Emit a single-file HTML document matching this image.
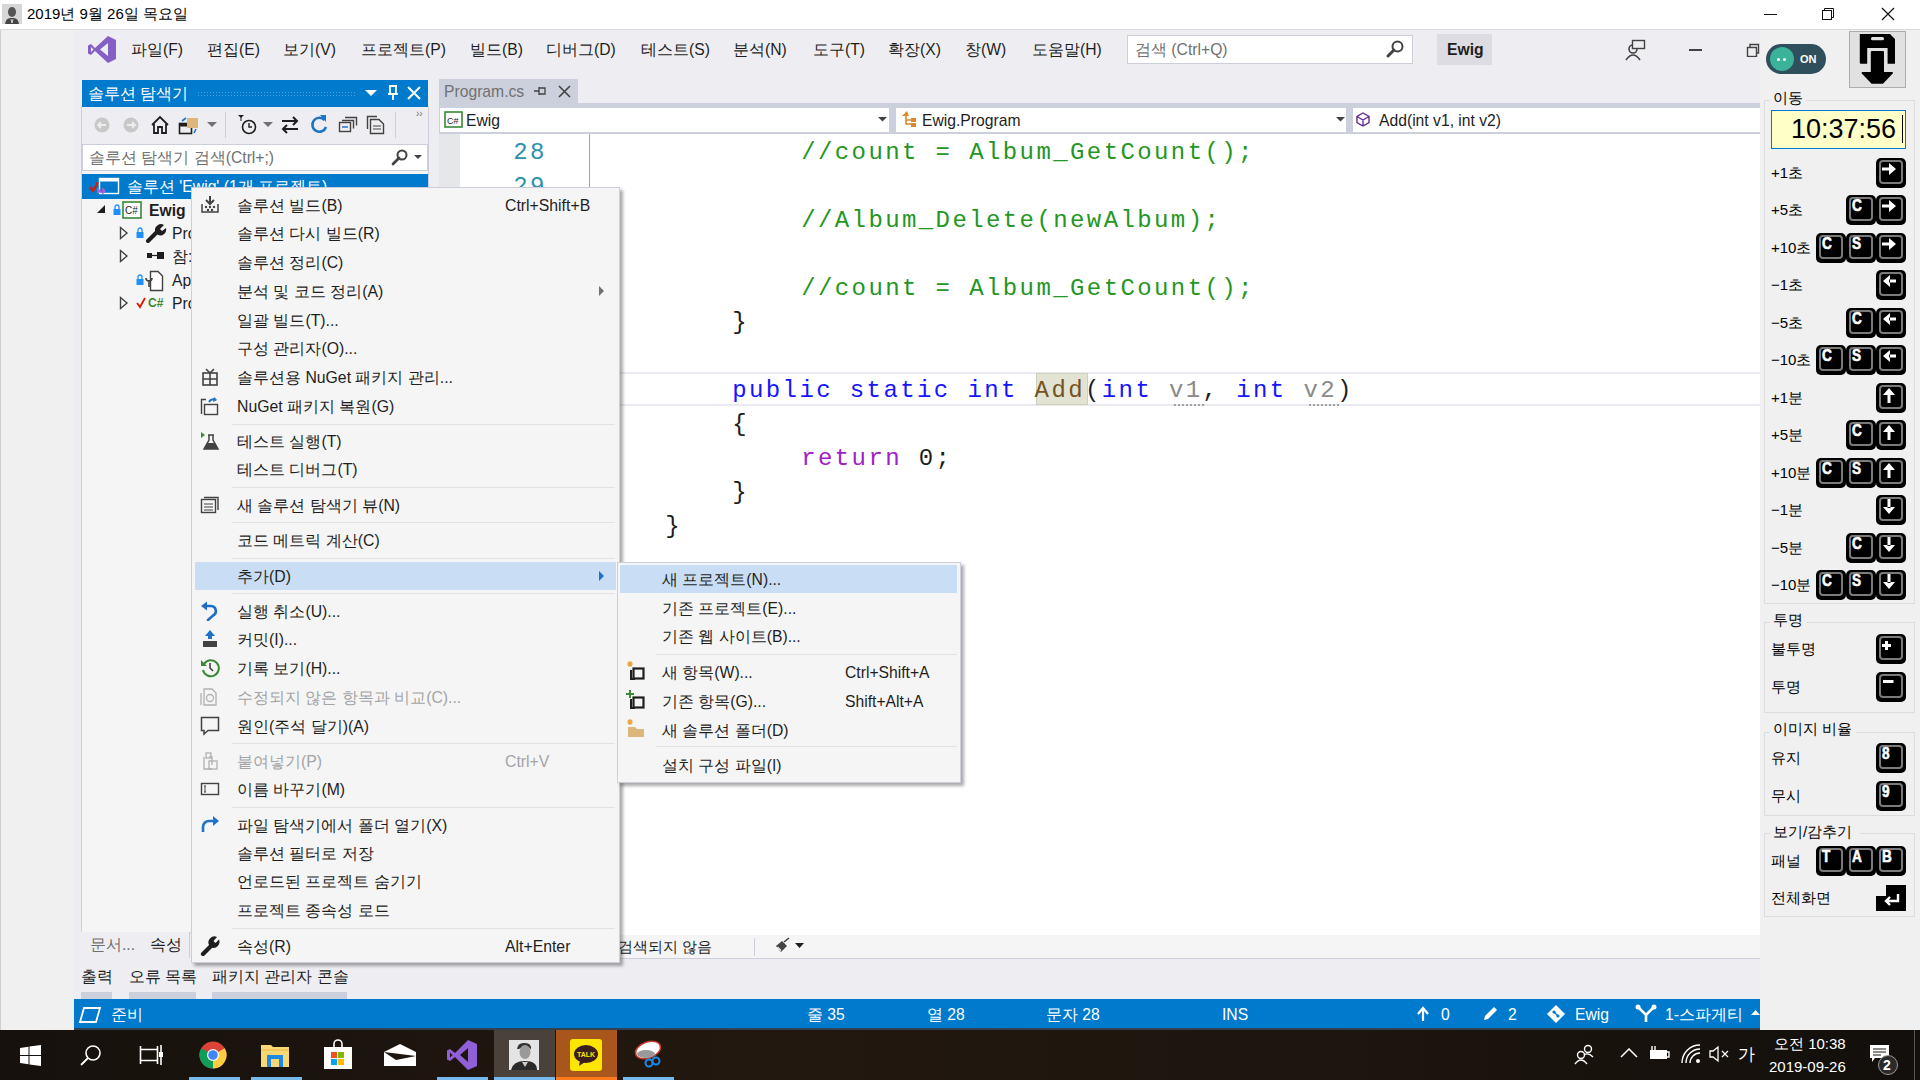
<!DOCTYPE html>
<html><head><meta charset="utf-8"><style>
*{margin:0;padding:0;box-sizing:border-box}
html,body{width:1920px;height:1080px;overflow:hidden;background:#f0f0f0;font-family:"Liberation Sans",sans-serif;color:#1e1e1e;position:relative}
.a{position:absolute}
.t{position:absolute;white-space:nowrap}
.m{font-family:"Liberation Mono",monospace;position:absolute;white-space:pre;font-size:24px;letter-spacing:2.4px;line-height:34px}
</style></head><body>
<div class="a" style="left:0px;top:0px;width:1920px;height:29px;background:#fff"></div>
<div class="a" style="left:0px;top:29px;width:1920px;height:1px;background:#d9d9d9"></div>
<div class="a" style="left:0px;top:30px;width:1px;height:1000px;background:#cfcfcf"></div>
<div class="a" style="left:73px;top:30px;width:1687px;height:1000px;background:#eeeef2"></div>
<div class="a" style="left:2px;top:4px;width:20px;height:20px;background:#d6d6d6"></div>
<svg class="a" style="left:2px;top:4px;" width="20" height="20" viewBox="0 0 20 20"><ellipse cx="10" cy="8" rx="4" ry="5" fill="#555"/><path d="M3 20 Q4 13 10 14 Q16 13 17 20Z" fill="#444"/><path d="M9 15L10 19L11 15" stroke="#ddd" stroke-width="1"/></svg>
<div class="t" style="left:27px;top:2.5px;font-size:15.01px;line-height:21px;color:#000;">2019년 9월 26일 목요일</div>
<div class="a" style="left:1764px;top:14px;width:13px;height:1px;background:#111"></div>
<svg class="a" style="left:1821px;top:7px;" width="14" height="14" viewBox="0 0 14 14"><rect x="1.5" y="3.5" width="9" height="9" fill="none" stroke="#111"/><path d="M3.5 3.5V1.5H12.5V10.5H10.5" fill="none" stroke="#111"/></svg>
<svg class="a" style="left:1881px;top:7px;" width="14" height="14" viewBox="0 0 14 14"><path d="M1 1L13 13M13 1L1 13" stroke="#111" stroke-width="1.2"/></svg>
<svg class="a" style="left:88px;top:36px;" width="28" height="27" viewBox="0 0 28 27"><path d="M20 0 L28 4 V23 L20 27 L7 15 L3 19 L0 17.5 V9.5 L3 8 L7 12 Z M20 7 L12 13.5 L20 20 Z M3 11 V16 L5.5 13.5 Z" fill="#865fc5" fill-rule="evenodd"/></svg>
<div class="t" style="left:131px;top:38.5px;font-size:15.7px;line-height:21px;color:#1e1e1e;">파일(F)</div>
<div class="t" style="left:207px;top:38.5px;font-size:15.7px;line-height:21px;color:#1e1e1e;">편집(E)</div>
<div class="t" style="left:283px;top:38.5px;font-size:15.7px;line-height:21px;color:#1e1e1e;">보기(V)</div>
<div class="t" style="left:361px;top:38.5px;font-size:15.7px;line-height:21px;color:#1e1e1e;">프로젝트(P)</div>
<div class="t" style="left:470px;top:38.5px;font-size:15.7px;line-height:21px;color:#1e1e1e;">빌드(B)</div>
<div class="t" style="left:546px;top:38.5px;font-size:15.7px;line-height:21px;color:#1e1e1e;">디버그(D)</div>
<div class="t" style="left:641px;top:38.5px;font-size:15.7px;line-height:21px;color:#1e1e1e;">테스트(S)</div>
<div class="t" style="left:733px;top:38.5px;font-size:15.7px;line-height:21px;color:#1e1e1e;">분석(N)</div>
<div class="t" style="left:813px;top:38.5px;font-size:15.7px;line-height:21px;color:#1e1e1e;">도구(T)</div>
<div class="t" style="left:888px;top:38.5px;font-size:15.7px;line-height:21px;color:#1e1e1e;">확장(X)</div>
<div class="t" style="left:965px;top:38.5px;font-size:15.7px;line-height:21px;color:#1e1e1e;">창(W)</div>
<div class="t" style="left:1032px;top:38.5px;font-size:15.7px;line-height:21px;color:#1e1e1e;">도움말(H)</div>
<div class="a" style="left:1127px;top:35px;width:286px;height:29px;background:#fff;border:1px solid #cccedb"></div>
<div class="t" style="left:1135px;top:38.5px;font-size:15.7px;line-height:21px;color:#717171;">검색 (Ctrl+Q)</div>
<svg class="a" style="left:1385px;top:39px;" width="20" height="20" viewBox="0 0 20 20"><circle cx="12.5" cy="7.5" r="5" fill="none" stroke="#424242" stroke-width="2"/><path d="M9 11 L3 17" stroke="#424242" stroke-width="3" stroke-linecap="round"/></svg>
<div class="a" style="left:1437px;top:34px;width:55px;height:31px;background:#dcdce2"></div>
<div class="t" style="left:1447px;top:38.5px;font-size:15.7px;line-height:21px;color:#1e1e1e;font-weight:bold">Ewig</div>
<svg class="a" style="left:1624px;top:38px;" width="24" height="24" viewBox="0 0 24 24"><circle cx="9" cy="11" r="4" fill="none" stroke="#424242" stroke-width="1.6"/><path d="M2 22 Q9 12 16 22" fill="none" stroke="#424242" stroke-width="1.6"/><rect x="8.5" y="2.5" width="12" height="8" fill="#eeeef2" stroke="#424242" stroke-width="1.4"/></svg>
<div class="a" style="left:1689px;top:49px;width:13px;height:2px;background:#424242"></div>
<svg class="a" style="left:1746px;top:43px;" width="14" height="14" viewBox="0 0 14 14"><rect x="1.5" y="4.5" width="9" height="9" fill="none" stroke="#424242" stroke-width="1.4"/><path d="M4 4V1.5H12.5V10H11" fill="none" stroke="#424242" stroke-width="1.4"/></svg>
<div class="a" style="left:82px;top:80px;width:346px;height:27px;background:#007acc"></div>
<div class="t" style="left:88px;top:82.5px;font-size:15.7px;line-height:21px;color:#fff;">솔루션 탐색기</div>
<div class="a" style="left:197px;top:91px;width:158px;height:6px;background-image:radial-gradient(#5aa5dc 0.8px,transparent 0.9px);background-size:3px 3px;opacity:.9"></div>
<svg class="a" style="left:364px;top:86px;" width="14" height="14" viewBox="0 0 14 14"><path d="M1 4H13L7 10Z" fill="#fff"/></svg>
<svg class="a" style="left:386px;top:85px;" width="14" height="16" viewBox="0 0 14 16"><path d="M3 1H11M4 1V9H10V1M2 9H12M7 9V15" fill="none" stroke="#fff" stroke-width="1.8"/></svg>
<svg class="a" style="left:407px;top:86px;" width="14" height="14" viewBox="0 0 14 14"><path d="M1 1L13 13M13 1L1 13" stroke="#fff" stroke-width="2"/></svg>
<div class="a" style="left:81px;top:107px;width:348px;height:826px;background:#f5f5f5;border:1px solid #cccedb;border-top:none"></div>
<div class="a" style="left:82px;top:107px;width:346px;height:37px;background:#eeeef2"></div>
<svg class="a" style="left:93px;top:116px;" width="18" height="18" viewBox="0 0 18 18"><circle cx="9" cy="9" r="7.5" fill="#c8c8c8"/><path d="M13 9H5M8 6L5 9L8 12" stroke="#eee" stroke-width="1.8" fill="none"/></svg>
<svg class="a" style="left:122px;top:116px;" width="18" height="18" viewBox="0 0 18 18"><circle cx="9" cy="9" r="7.5" fill="#c8c8c8"/><path d="M5 9H13M10 6L13 9L10 12" stroke="#eee" stroke-width="1.8" fill="none"/></svg>
<svg class="a" style="left:150px;top:115px;" width="20" height="20" viewBox="0 0 20 20"><path d="M2 10L10 2L18 10M4 9V18H8V12H12V18H16V9" fill="none" stroke="#1e1e1e" stroke-width="1.8"/></svg>
<svg class="a" style="left:178px;top:115px;" width="22" height="20" viewBox="0 0 22 20"><rect x="1.5" y="8.5" width="12" height="10" fill="none" stroke="#1e1e1e" stroke-width="1.6"/><rect x="1.5" y="8.5" width="12" height="3" fill="#1e1e1e"/><rect x="9" y="3" width="11" height="10" fill="#dcb67a"/><path d="M4 6 L8 3 M18 14 L16 18" stroke="#1e73c8" stroke-width="1.6"/></svg>
<svg class="a" style="left:207px;top:122px;" width="10" height="6" viewBox="0 0 10 6"><path d="M0 0H10L5 5Z" fill="#717171"/></svg>
<div class="a" style="left:225px;top:112px;width:1px;height:26px;background:#cccedb"></div>
<svg class="a" style="left:236px;top:114px;" width="22" height="22" viewBox="0 0 22 22"><path d="M2 1H8L5 4Z" fill="#1e1e1e"/><path d="M5 3V7" stroke="#1e1e1e"/><circle cx="13" cy="13" r="6.5" fill="none" stroke="#1e1e1e" stroke-width="1.6"/><path d="M13 9V13H16" stroke="#1e1e1e" stroke-width="1.4" fill="none"/></svg>
<svg class="a" style="left:263px;top:122px;" width="10" height="6" viewBox="0 0 10 6"><path d="M0 0H10L5 5Z" fill="#717171"/></svg>
<svg class="a" style="left:280px;top:116px;" width="20" height="18" viewBox="0 0 20 18"><path d="M2 5H17M13 1L17 5L13 9M18 13H3M7 9L3 13L7 17" fill="none" stroke="#1e1e1e" stroke-width="2"/></svg>
<svg class="a" style="left:309px;top:114px;" width="20" height="22" viewBox="0 0 20 22"><path d="M15.5 6A7 7 0 1 0 17 13" fill="none" stroke="#1e73c8" stroke-width="2.6"/><path d="M11 1L17 1L17 8Z" fill="#1e73c8"/></svg>
<svg class="a" style="left:338px;top:116px;" width="20" height="18" viewBox="0 0 20 18"><rect x="1.5" y="6.5" width="11" height="9" fill="#eeeef2" stroke="#424242" stroke-width="1.4"/><path d="M4 4.5H15.5V12.5M7 1.5H18.5V9.5" fill="none" stroke="#424242" stroke-width="1.4"/><path d="M4 11H10" stroke="#1e73c8" stroke-width="1.5"/></svg>
<svg class="a" style="left:366px;top:115px;" width="20" height="20" viewBox="0 0 20 20"><path d="M1.5 14V1.5H11" fill="none" stroke="#424242" stroke-width="1.4"/><path d="M4.5 4.5H13L17.5 9V18.5H4.5Z" fill="#eeeef2" stroke="#424242" stroke-width="1.4"/><path d="M7 11H15M7 14H15" stroke="#424242" stroke-width="1.2"/></svg>
<div class="a" style="left:395px;top:112px;width:1px;height:26px;background:#cccedb"></div>
<div class="t" style="left:416px;top:107.0px;font-size:10px;line-height:14px;color:#717171;">&#8250;&#8250;</div>
<div class="a" style="left:82px;top:144px;width:346px;height:27px;background:#fff;border:1px solid #cccedb"></div>
<div class="t" style="left:89px;top:146.5px;font-size:15.7px;line-height:21px;color:#717171;">솔루션 탐색기 검색(Ctrl+;)</div>
<svg class="a" style="left:391px;top:148px;" width="18" height="18" viewBox="0 0 18 18"><circle cx="11" cy="7" r="4.5" fill="none" stroke="#424242" stroke-width="2"/><path d="M8 10L2 16" stroke="#424242" stroke-width="2.8" stroke-linecap="round"/></svg>
<svg class="a" style="left:414px;top:155px;" width="8" height="5" viewBox="0 0 8 5"><path d="M0 0H8L4 4Z" fill="#424242"/></svg>
<div class="a" style="left:82px;top:174px;width:346px;height:25px;background:#007acc"></div>
<svg class="a" style="left:88px;top:176px;" width="34" height="22" viewBox="0 0 34 22"><path d="M2 11L5 15L10 6" stroke="#e51400" stroke-width="2.2" fill="none"/><rect x="11.5" y="2.5" width="19" height="15" fill="#007acc" stroke="#fff" stroke-width="1.4"/><rect x="11.5" y="2.5" width="19" height="3" fill="#fff"/><path d="M9 12L14 15L9 18Z M14 11V19L18 15Z" fill="#a55fd8"/></svg>
<div class="t" style="left:127px;top:175.5px;font-size:15.7px;line-height:21px;color:#fff;">솔루션 'Ewig' (1개 프로젝트)</div>
<svg class="a" style="left:96px;top:204px;" width="10" height="10" viewBox="0 0 10 10"><path d="M9 1V9H1Z" fill="#1e1e1e"/></svg>
<svg class="a" style="left:112px;top:203px;" width="10" height="13" viewBox="0 0 10 13"><path d="M3 6V4A2 2 0 0 1 7 4V6" fill="none" stroke="#1e90ff" stroke-width="1.3"/><rect x="1.5" y="6" width="7" height="6" fill="#1e90ff"/></svg>
<svg class="a" style="left:122px;top:201px;" width="20" height="18" viewBox="0 0 20 18"><rect x="1" y="1" width="18" height="16" fill="#fff" stroke="#388a34" stroke-width="1.6"/><text x="3" y="13" font-size="10" font-family="Liberation Sans" fill="#1e1e1e">C#</text></svg>
<div class="t" style="left:149px;top:199.5px;font-size:15.7px;line-height:21px;color:#1e1e1e;font-weight:bold">Ewig</div>
<svg class="a" style="left:119px;top:226px;" width="10" height="14" viewBox="0 0 10 14"><path d="M1.5 1.5L8 7L1.5 12.5Z" fill="none" stroke="#424242" stroke-width="1.4"/></svg>
<svg class="a" style="left:119px;top:249px;" width="10" height="14" viewBox="0 0 10 14"><path d="M1.5 1.5L8 7L1.5 12.5Z" fill="none" stroke="#424242" stroke-width="1.4"/></svg>
<svg class="a" style="left:119px;top:296px;" width="10" height="14" viewBox="0 0 10 14"><path d="M1.5 1.5L8 7L1.5 12.5Z" fill="none" stroke="#424242" stroke-width="1.4"/></svg>
<svg class="a" style="left:135px;top:226px;" width="10" height="13" viewBox="0 0 10 13"><path d="M3 6V4A2 2 0 0 1 7 4V6" fill="none" stroke="#1e90ff" stroke-width="1.3"/><rect x="1.5" y="6" width="7" height="6" fill="#1e90ff"/></svg>
<svg class="a" style="left:145px;top:223px;" width="22" height="20" viewBox="0 0 22 20"><path d="M3 18L12 9" stroke="#1e1e1e" stroke-width="4" stroke-linecap="round"/><path d="M10 8A6 6 0 0 1 19 2L15 6L17 8L21 5A6 6 0 0 1 13 12Z" fill="#1e1e1e"/></svg>
<div class="t" style="left:172px;top:222.5px;font-size:15.7px;line-height:21px;color:#1e1e1e;">Pro</div>
<svg class="a" style="left:145px;top:250px;" width="22" height="12" viewBox="0 0 22 12"><rect x="2" y="3" width="5" height="5" fill="#1e1e1e"/><path d="M7 5.5H12" stroke="#1e1e1e" stroke-width="1.2"/><rect x="12" y="2" width="7" height="7" fill="#1e1e1e"/></svg>
<div class="t" style="left:172px;top:245.5px;font-size:15.7px;line-height:21px;color:#1e1e1e;">참:</div>
<svg class="a" style="left:135px;top:273px;" width="10" height="13" viewBox="0 0 10 13"><path d="M3 6V4A2 2 0 0 1 7 4V6" fill="none" stroke="#1e90ff" stroke-width="1.3"/><rect x="1.5" y="6" width="7" height="6" fill="#1e90ff"/></svg>
<svg class="a" style="left:145px;top:270px;" width="20" height="22" viewBox="0 0 20 22"><path d="M5.5 1.5H13L17.5 6V20.5H5.5Z" fill="#fff" stroke="#424242" stroke-width="1.4"/><path d="M1 8A3 3 0 0 0 7 8M4 10V17" stroke="#424242" stroke-width="1.6" fill="none"/></svg>
<div class="t" style="left:172px;top:269.5px;font-size:15.7px;line-height:21px;color:#1e1e1e;">Ap</div>
<svg class="a" style="left:136px;top:297px;" width="10" height="12" viewBox="0 0 10 12"><path d="M1 6L4 10L9 1" stroke="#e51400" stroke-width="1.8" fill="none"/></svg>
<div class="t" style="left:148px;top:295.0px;font-size:12px;line-height:16px;color:#388a34;font-weight:bold">C#</div>
<div class="t" style="left:172px;top:292.5px;font-size:15.7px;line-height:21px;color:#1e1e1e;">Pro</div>
<div class="a" style="left:439px;top:79px;width:139px;height:24px;background:#ccd0dc"></div>
<div class="t" style="left:444px;top:80.5px;font-size:15.7px;line-height:21px;color:#717171;">Program.cs</div>
<svg class="a" style="left:533px;top:85px;" width="14" height="12" viewBox="0 0 14 12"><path d="M1 6H6M6 2V10M6 3H12V9H6" fill="none" stroke="#424242" stroke-width="1.3"/></svg>
<svg class="a" style="left:558px;top:85px;" width="13" height="13" viewBox="0 0 13 13"><path d="M1 1L12 12M12 1L1 12" stroke="#424242" stroke-width="1.6"/></svg>
<div class="a" style="left:439px;top:103px;width:1321px;height:4px;background:#ccd0dc"></div>
<div class="a" style="left:439px;top:107px;width:1321px;height:27px;background:#ccd0dc"></div>
<div class="a" style="left:440px;top:108px;width:449px;height:24px;background:#fff"></div>
<div class="a" style="left:896px;top:108px;width:450px;height:24px;background:#fff"></div>
<div class="a" style="left:1353px;top:108px;width:407px;height:24px;background:#fff"></div>
<svg class="a" style="left:444px;top:111px;" width="19" height="17" viewBox="0 0 19 17"><rect x="1" y="1" width="17" height="15" fill="#fff" stroke="#388a34" stroke-width="1.6"/><text x="3" y="12.5" font-size="9" font-family="Liberation Sans" fill="#1e1e1e">C#</text></svg>
<div class="t" style="left:466px;top:109.5px;font-size:15.7px;line-height:21px;color:#1e1e1e;">Ewig</div>
<svg class="a" style="left:878px;top:117px;" width="9" height="5" viewBox="0 0 9 5"><path d="M0 0H9L4.5 4.5Z" fill="#424242"/></svg>
<svg class="a" style="left:900px;top:110px;" width="20" height="20" viewBox="0 0 20 20"><path d="M2 6L7 1L9 6Z" fill="#d98b2b"/><path d="M6 6V14H13M6 10H13" stroke="#d98b2b" stroke-width="1.6" fill="none"/><rect x="11" y="8" width="5" height="4" fill="#d98b2b"/><rect x="11" y="13" width="5" height="4" fill="#d98b2b"/></svg>
<div class="t" style="left:922px;top:109.5px;font-size:15.7px;line-height:21px;color:#1e1e1e;">Ewig.Program</div>
<svg class="a" style="left:1336px;top:117px;" width="9" height="5" viewBox="0 0 9 5"><path d="M0 0H9L4.5 4.5Z" fill="#424242"/></svg>
<svg class="a" style="left:1356px;top:112px;" width="14" height="15" viewBox="0 0 14 15"><path d="M7 1L13 4.5V10.5L7 14L1 10.5V4.5Z M1 4.5L7 8L13 4.5M7 8V14" fill="none" stroke="#652d90" stroke-width="1.4"/></svg>
<div class="t" style="left:1379px;top:109.5px;font-size:15.7px;line-height:21px;color:#1e1e1e;">Add(int v1, int v2)</div>
<div class="a" style="left:439px;top:134px;width:1321px;height:801px;background:#fff"></div>
<div class="a" style="left:439px;top:134px;width:21px;height:801px;background:#e6e7e8"></div>
<div class="a" style="left:589px;top:134px;width:1px;height:801px;background:#a5a5a5"></div>
<div class="a" style="left:590px;top:372px;width:1170px;height:2px;background:#eaeaf2"></div>
<div class="a" style="left:590px;top:404px;width:1170px;height:2px;background:#eaeaf2"></div>
<div class="m" style="left:513.2px;top:136px;color:#2b91af">28</div>
<div class="m" style="left:513.2px;top:170px;color:#2b91af">29</div>
<div class="m" style="left:801.2px;top:136px;color:#239623">//count = Album_GetCount();</div>
<div class="m" style="left:801.2px;top:204px;color:#239623">//Album_Delete(newAlbum);</div>
<div class="m" style="left:801.2px;top:272px;color:#239623">//count = Album_GetCount();</div>
<div class="m" style="left:732.2px;top:306px;color:#1e1e1e">}</div>
<div class="a" style="left:1036px;top:373px;width:52px;height:32px;background:#e3e3d3;border:1px solid #cfcfbf"></div>
<div class="m" style="left:732.2px;top:374px;color:#1515ff">public static int </div>
<div class="m" style="left:1034.6px;top:374px;color:#74531f">Add</div>
<div class="m" style="left:1085.0px;top:374px;color:#1e1e1e">(</div>
<div class="m" style="left:1101.8px;top:374px;color:#1515ff">int </div>
<div class="m" style="left:1169.0px;top:374px;color:#8a8a8a">v1</div>
<div class="m" style="left:1202.6px;top:374px;color:#1e1e1e">, </div>
<div class="m" style="left:1236.2px;top:374px;color:#1515ff">int </div>
<div class="m" style="left:1303.4px;top:374px;color:#8a8a8a">v2</div>
<div class="m" style="left:1337.0px;top:374px;color:#1e1e1e">)</div>
<div class="a" style="left:1174px;top:404px;width:30px;height:2px;background:repeating-linear-gradient(90deg,#a0a0a0 0 2px,transparent 2px 4px)"></div>
<div class="a" style="left:1309px;top:404px;width:30px;height:2px;background:repeating-linear-gradient(90deg,#a0a0a0 0 2px,transparent 2px 4px)"></div>
<div class="m" style="left:732.2px;top:408px;color:#1e1e1e">{</div>
<div class="m" style="left:801.2px;top:442px;color:#a020c8">return </div>
<div class="m" style="left:918.8px;top:442px;color:#1e1e1e">0;</div>
<div class="m" style="left:732.2px;top:476px;color:#1e1e1e">}</div>
<div class="m" style="left:665.2px;top:510px;color:#1e1e1e">}</div>
<div class="a" style="left:81px;top:932px;width:108px;height:26px;background:#eeeef2"></div>
<div class="t" style="left:90px;top:933.5px;font-size:15.7px;line-height:21px;color:#717171;">문서...</div>
<div class="t" style="left:150px;top:933.5px;font-size:15.7px;line-height:21px;color:#1e1e1e;">속성</div>
<div class="a" style="left:189px;top:932px;width:1px;height:26px;background:#cccedb"></div>
<div class="a" style="left:439px;top:935px;width:1321px;height:24px;background:#f5f5f5;border-bottom:1px solid #cccedb"></div>
<div class="t" style="left:618px;top:935.5px;font-size:15px;line-height:21px;color:#1e1e1e;">검색되지 않음</div>
<div class="a" style="left:754px;top:938px;width:1px;height:18px;background:#cccedb"></div>
<svg class="a" style="left:773px;top:937px;" width="18" height="18" viewBox="0 0 18 18"><path d="M3 9L9 4L14 9L8 15Z" fill="#424242"/><path d="M4.5 10L8 13.5" stroke="#f5f5f5" stroke-width="1.2"/><path d="M11 5L16 1" stroke="#424242" stroke-width="1.6"/></svg>
<svg class="a" style="left:795px;top:943px;" width="9" height="6" viewBox="0 0 9 6"><path d="M0 0H9L4.5 5Z" fill="#1e1e1e"/></svg>
<div class="t" style="left:81px;top:965.5px;font-size:15.7px;line-height:21px;color:#1e1e1e;">출력</div>
<div class="t" style="left:129px;top:965.5px;font-size:15.7px;line-height:21px;color:#1e1e1e;">오류 목록</div>
<div class="t" style="left:212px;top:965.5px;font-size:15.7px;line-height:21px;color:#1e1e1e;">패키지 관리자 콘솔</div>
<div class="a" style="left:81px;top:992px;width:31px;height:7px;background:#ccd0dc"></div>
<div class="a" style="left:129px;top:992px;width:67px;height:7px;background:#ccd0dc"></div>
<div class="a" style="left:212px;top:992px;width:135px;height:7px;background:#ccd0dc"></div>
<div class="a" style="left:74px;top:999px;width:1686px;height:29px;background:#007acc"></div>
<div class="a" style="left:74px;top:1028px;width:1686px;height:2px;background:#2e4253"></div>
<svg class="a" style="left:78px;top:1005px;" width="24" height="20" viewBox="0 0 24 20"><path d="M6 3H22L18 17H2Z" fill="none" stroke="#fff" stroke-width="1.8"/></svg>
<div class="t" style="left:111px;top:1003.5px;font-size:15.7px;line-height:21px;color:#fff;">준비</div>
<div class="t" style="left:807px;top:1003.5px;font-size:15.7px;line-height:21px;color:#fff;">줄 35</div>
<div class="t" style="left:927px;top:1003.5px;font-size:15.7px;line-height:21px;color:#fff;">열 28</div>
<div class="t" style="left:1046px;top:1003.5px;font-size:15.7px;line-height:21px;color:#fff;">문자 28</div>
<div class="t" style="left:1222px;top:1003.5px;font-size:15.7px;line-height:21px;color:#fff;">INS</div>
<svg class="a" style="left:1416px;top:1006px;" width="14" height="16" viewBox="0 0 14 16"><path d="M7 15V3M2 8L7 2L12 8" fill="none" stroke="#fff" stroke-width="2.2"/></svg>
<div class="t" style="left:1441px;top:1003.5px;font-size:15.7px;line-height:21px;color:#fff;">0</div>
<svg class="a" style="left:1482px;top:1005px;" width="16" height="17" viewBox="0 0 16 17"><path d="M2 15L3 11L12 2L15 5L6 14Z" fill="#fff"/></svg>
<div class="t" style="left:1508px;top:1003.5px;font-size:15.7px;line-height:21px;color:#fff;">2</div>
<svg class="a" style="left:1546px;top:1004px;" width="20" height="20" viewBox="0 0 20 20"><path d="M10 1L19 10L10 19L1 10Z" fill="#fff"/><circle cx="8" cy="8" r="1.6" fill="#007acc"/><circle cx="12" cy="12" r="1.6" fill="#007acc"/><path d="M8 8L12 12" stroke="#007acc" stroke-width="1.4"/></svg>
<div class="t" style="left:1575px;top:1003.5px;font-size:15.7px;line-height:21px;color:#fff;">Ewig</div>
<svg class="a" style="left:1635px;top:1004px;" width="22" height="20" viewBox="0 0 22 20"><path d="M3 3L11 11L19 3M11 11V18" fill="none" stroke="#fff" stroke-width="2.6"/><circle cx="3" cy="3" r="2.5" fill="#fff"/><circle cx="19" cy="3" r="2.5" fill="#fff"/></svg>
<div class="t" style="left:1665px;top:1003.5px;font-size:15.7px;line-height:21px;color:#fff;">1-스파게티</div>
<svg class="a" style="left:1751px;top:1010px;" width="9" height="6" viewBox="0 0 9 6"><path d="M0 5H9L4.5 0Z" fill="#fff"/></svg>
<div class="a" style="left:1760px;top:30px;width:160px;height:1000px;background:#f0f0f0"></div>
<div class="a" style="left:1766px;top:44px;width:60px;height:30px;background:#2f4f5c;border-radius:15px"></div>
<div class="a" style="left:1770px;top:47px;width:24px;height:24px;background:#3bb39b;border-radius:12px"></div>
<div class="a" style="left:1777px;top:58px;width:3px;height:3px;background:#fff;border-radius:2px"></div>
<div class="a" style="left:1783px;top:58px;width:3px;height:3px;background:#fff;border-radius:2px"></div>
<div class="t" style="left:1800px;top:51.5px;font-size:11px;line-height:15px;color:#fff;font-weight:bold">ON</div>
<div class="a" style="left:1849px;top:31px;width:57px;height:57px;background:#e1e1e1;border:1px solid #adadad"></div>
<svg class="a" style="left:1849px;top:31px;" width="57" height="57" viewBox="0 0 57 57"><path d="M10.8 2.9H41L46 8V32.3Q46 32.8 45 32.8H38.6V17H18.2V32.8H11.8Q10.8 32.8 10.8 31.8Z" fill="#000"/><rect x="22" y="6" width="13" height="3.2" rx="1.5" fill="#e1e1e1"/><rect x="21.8" y="20" width="13.2" height="22" rx="1" fill="#000"/><path d="M13.5 41H43.2Q44.5 41 43.7 42.5L34 52.7H22.6L12.8 42.5Q12 41 13.5 41Z" fill="#000"/></svg>
<div class="a" style="left:1764px;top:100px;width:151px;height:504px;border:1px solid #dcdcdc"></div>
<div class="a" style="left:1770px;top:90px;width:36px;height:16px;background:#f0f0f0"></div>
<div class="t" style="left:1773px;top:86.5px;font-size:15px;line-height:21px;color:#000;">이동</div>
<div class="a" style="left:1771px;top:110px;width:135px;height:39px;background:#ffffc8;border:1px solid #0078d7"></div>
<div class="t" style="left:1791px;top:113.0px;font-size:27px;line-height:32px;color:#000;font-family:'Liberation Sans';letter-spacing:0px">10:37:56</div>
<div class="a" style="left:1902px;top:115px;width:1px;height:28px;background:#000"></div>
<div class="t" style="left:1771px;top:161.5px;font-size:15px;line-height:21px;color:#000;">+1초</div>
<div class="a" style="left:1876px;top:158px;width:30px;height:30px;background:#000;border-radius:5px"></div>
<div class="a" style="left:1879px;top:160px;width:24px;height:24px;border:2px solid #7a7a7a;border-radius:4px"></div>
<svg class="a" style="left:1876px;top:158px;" width="30" height="30" viewBox="0 0 30 30"><path d="M6 9.5H14V12.5H6Z M13 5L20 11L13 17Z" fill="#fff"/></svg>
<div class="t" style="left:1771px;top:198.5px;font-size:15px;line-height:21px;color:#000;">+5초</div>
<div class="a" style="left:1846px;top:195px;width:30px;height:30px;background:#000;border-radius:5px"></div>
<div class="a" style="left:1849px;top:197px;width:24px;height:24px;border:2px solid #7a7a7a;border-radius:4px"></div>
<div class="t" style="left:1852px;top:198.0px;font-size:16px;line-height:16px;color:#fff;font-weight:bold;transform:scaleX(0.85);transform-origin:left;-webkit-text-stroke:0.6px #fff">C</div>
<div class="a" style="left:1876px;top:195px;width:30px;height:30px;background:#000;border-radius:5px"></div>
<div class="a" style="left:1879px;top:197px;width:24px;height:24px;border:2px solid #7a7a7a;border-radius:4px"></div>
<svg class="a" style="left:1876px;top:195px;" width="30" height="30" viewBox="0 0 30 30"><path d="M6 9.5H14V12.5H6Z M13 5L20 11L13 17Z" fill="#fff"/></svg>
<div class="t" style="left:1771px;top:236.5px;font-size:15px;line-height:21px;color:#000;">+10초</div>
<div class="a" style="left:1816px;top:233px;width:30px;height:30px;background:#000;border-radius:5px"></div>
<div class="a" style="left:1819px;top:235px;width:24px;height:24px;border:2px solid #7a7a7a;border-radius:4px"></div>
<div class="t" style="left:1822px;top:236.0px;font-size:16px;line-height:16px;color:#fff;font-weight:bold;transform:scaleX(0.85);transform-origin:left;-webkit-text-stroke:0.6px #fff">C</div>
<div class="a" style="left:1846px;top:233px;width:30px;height:30px;background:#000;border-radius:5px"></div>
<div class="a" style="left:1849px;top:235px;width:24px;height:24px;border:2px solid #7a7a7a;border-radius:4px"></div>
<div class="t" style="left:1852px;top:236.0px;font-size:16px;line-height:16px;color:#fff;font-weight:bold;transform:scaleX(0.85);transform-origin:left;-webkit-text-stroke:0.6px #fff">S</div>
<div class="a" style="left:1876px;top:233px;width:30px;height:30px;background:#000;border-radius:5px"></div>
<div class="a" style="left:1879px;top:235px;width:24px;height:24px;border:2px solid #7a7a7a;border-radius:4px"></div>
<svg class="a" style="left:1876px;top:233px;" width="30" height="30" viewBox="0 0 30 30"><path d="M6 9.5H14V12.5H6Z M13 5L20 11L13 17Z" fill="#fff"/></svg>
<div class="t" style="left:1771px;top:273.5px;font-size:15px;line-height:21px;color:#000;">−1초</div>
<div class="a" style="left:1876px;top:270px;width:30px;height:30px;background:#000;border-radius:5px"></div>
<div class="a" style="left:1879px;top:272px;width:24px;height:24px;border:2px solid #7a7a7a;border-radius:4px"></div>
<svg class="a" style="left:1876px;top:270px;" width="30" height="30" viewBox="0 0 30 30"><path d="M13 9.5H20V12.5H13Z M14 5L7 11L14 17Z" fill="#fff"/></svg>
<div class="t" style="left:1771px;top:311.5px;font-size:15px;line-height:21px;color:#000;">−5초</div>
<div class="a" style="left:1846px;top:308px;width:30px;height:30px;background:#000;border-radius:5px"></div>
<div class="a" style="left:1849px;top:310px;width:24px;height:24px;border:2px solid #7a7a7a;border-radius:4px"></div>
<div class="t" style="left:1852px;top:311.0px;font-size:16px;line-height:16px;color:#fff;font-weight:bold;transform:scaleX(0.85);transform-origin:left;-webkit-text-stroke:0.6px #fff">C</div>
<div class="a" style="left:1876px;top:308px;width:30px;height:30px;background:#000;border-radius:5px"></div>
<div class="a" style="left:1879px;top:310px;width:24px;height:24px;border:2px solid #7a7a7a;border-radius:4px"></div>
<svg class="a" style="left:1876px;top:308px;" width="30" height="30" viewBox="0 0 30 30"><path d="M13 9.5H20V12.5H13Z M14 5L7 11L14 17Z" fill="#fff"/></svg>
<div class="t" style="left:1771px;top:348.5px;font-size:15px;line-height:21px;color:#000;">−10초</div>
<div class="a" style="left:1816px;top:345px;width:30px;height:30px;background:#000;border-radius:5px"></div>
<div class="a" style="left:1819px;top:347px;width:24px;height:24px;border:2px solid #7a7a7a;border-radius:4px"></div>
<div class="t" style="left:1822px;top:348.0px;font-size:16px;line-height:16px;color:#fff;font-weight:bold;transform:scaleX(0.85);transform-origin:left;-webkit-text-stroke:0.6px #fff">C</div>
<div class="a" style="left:1846px;top:345px;width:30px;height:30px;background:#000;border-radius:5px"></div>
<div class="a" style="left:1849px;top:347px;width:24px;height:24px;border:2px solid #7a7a7a;border-radius:4px"></div>
<div class="t" style="left:1852px;top:348.0px;font-size:16px;line-height:16px;color:#fff;font-weight:bold;transform:scaleX(0.85);transform-origin:left;-webkit-text-stroke:0.6px #fff">S</div>
<div class="a" style="left:1876px;top:345px;width:30px;height:30px;background:#000;border-radius:5px"></div>
<div class="a" style="left:1879px;top:347px;width:24px;height:24px;border:2px solid #7a7a7a;border-radius:4px"></div>
<svg class="a" style="left:1876px;top:345px;" width="30" height="30" viewBox="0 0 30 30"><path d="M13 9.5H20V12.5H13Z M14 5L7 11L14 17Z" fill="#fff"/></svg>
<div class="t" style="left:1771px;top:386.5px;font-size:15px;line-height:21px;color:#000;">+1분</div>
<div class="a" style="left:1876px;top:383px;width:30px;height:30px;background:#000;border-radius:5px"></div>
<div class="a" style="left:1879px;top:385px;width:24px;height:24px;border:2px solid #7a7a7a;border-radius:4px"></div>
<svg class="a" style="left:1876px;top:383px;" width="30" height="30" viewBox="0 0 30 30"><path d="M11.5 11H14.5V20H11.5Z M7 12L13 5L19 12Z" fill="#fff"/></svg>
<div class="t" style="left:1771px;top:423.5px;font-size:15px;line-height:21px;color:#000;">+5분</div>
<div class="a" style="left:1846px;top:420px;width:30px;height:30px;background:#000;border-radius:5px"></div>
<div class="a" style="left:1849px;top:422px;width:24px;height:24px;border:2px solid #7a7a7a;border-radius:4px"></div>
<div class="t" style="left:1852px;top:423.0px;font-size:16px;line-height:16px;color:#fff;font-weight:bold;transform:scaleX(0.85);transform-origin:left;-webkit-text-stroke:0.6px #fff">C</div>
<div class="a" style="left:1876px;top:420px;width:30px;height:30px;background:#000;border-radius:5px"></div>
<div class="a" style="left:1879px;top:422px;width:24px;height:24px;border:2px solid #7a7a7a;border-radius:4px"></div>
<svg class="a" style="left:1876px;top:420px;" width="30" height="30" viewBox="0 0 30 30"><path d="M11.5 11H14.5V20H11.5Z M7 12L13 5L19 12Z" fill="#fff"/></svg>
<div class="t" style="left:1771px;top:461.5px;font-size:15px;line-height:21px;color:#000;">+10분</div>
<div class="a" style="left:1816px;top:458px;width:30px;height:30px;background:#000;border-radius:5px"></div>
<div class="a" style="left:1819px;top:460px;width:24px;height:24px;border:2px solid #7a7a7a;border-radius:4px"></div>
<div class="t" style="left:1822px;top:461.0px;font-size:16px;line-height:16px;color:#fff;font-weight:bold;transform:scaleX(0.85);transform-origin:left;-webkit-text-stroke:0.6px #fff">C</div>
<div class="a" style="left:1846px;top:458px;width:30px;height:30px;background:#000;border-radius:5px"></div>
<div class="a" style="left:1849px;top:460px;width:24px;height:24px;border:2px solid #7a7a7a;border-radius:4px"></div>
<div class="t" style="left:1852px;top:461.0px;font-size:16px;line-height:16px;color:#fff;font-weight:bold;transform:scaleX(0.85);transform-origin:left;-webkit-text-stroke:0.6px #fff">S</div>
<div class="a" style="left:1876px;top:458px;width:30px;height:30px;background:#000;border-radius:5px"></div>
<div class="a" style="left:1879px;top:460px;width:24px;height:24px;border:2px solid #7a7a7a;border-radius:4px"></div>
<svg class="a" style="left:1876px;top:458px;" width="30" height="30" viewBox="0 0 30 30"><path d="M11.5 11H14.5V20H11.5Z M7 12L13 5L19 12Z" fill="#fff"/></svg>
<div class="t" style="left:1771px;top:498.5px;font-size:15px;line-height:21px;color:#000;">−1분</div>
<div class="a" style="left:1876px;top:495px;width:30px;height:30px;background:#000;border-radius:5px"></div>
<div class="a" style="left:1879px;top:497px;width:24px;height:24px;border:2px solid #7a7a7a;border-radius:4px"></div>
<svg class="a" style="left:1876px;top:495px;" width="30" height="30" viewBox="0 0 30 30"><path d="M11.5 4H14.5V13H11.5Z M7 12L13 19L19 12Z" fill="#fff"/></svg>
<div class="t" style="left:1771px;top:536.5px;font-size:15px;line-height:21px;color:#000;">−5분</div>
<div class="a" style="left:1846px;top:533px;width:30px;height:30px;background:#000;border-radius:5px"></div>
<div class="a" style="left:1849px;top:535px;width:24px;height:24px;border:2px solid #7a7a7a;border-radius:4px"></div>
<div class="t" style="left:1852px;top:536.0px;font-size:16px;line-height:16px;color:#fff;font-weight:bold;transform:scaleX(0.85);transform-origin:left;-webkit-text-stroke:0.6px #fff">C</div>
<div class="a" style="left:1876px;top:533px;width:30px;height:30px;background:#000;border-radius:5px"></div>
<div class="a" style="left:1879px;top:535px;width:24px;height:24px;border:2px solid #7a7a7a;border-radius:4px"></div>
<svg class="a" style="left:1876px;top:533px;" width="30" height="30" viewBox="0 0 30 30"><path d="M11.5 4H14.5V13H11.5Z M7 12L13 19L19 12Z" fill="#fff"/></svg>
<div class="t" style="left:1771px;top:573.5px;font-size:15px;line-height:21px;color:#000;">−10분</div>
<div class="a" style="left:1816px;top:570px;width:30px;height:30px;background:#000;border-radius:5px"></div>
<div class="a" style="left:1819px;top:572px;width:24px;height:24px;border:2px solid #7a7a7a;border-radius:4px"></div>
<div class="t" style="left:1822px;top:573.0px;font-size:16px;line-height:16px;color:#fff;font-weight:bold;transform:scaleX(0.85);transform-origin:left;-webkit-text-stroke:0.6px #fff">C</div>
<div class="a" style="left:1846px;top:570px;width:30px;height:30px;background:#000;border-radius:5px"></div>
<div class="a" style="left:1849px;top:572px;width:24px;height:24px;border:2px solid #7a7a7a;border-radius:4px"></div>
<div class="t" style="left:1852px;top:573.0px;font-size:16px;line-height:16px;color:#fff;font-weight:bold;transform:scaleX(0.85);transform-origin:left;-webkit-text-stroke:0.6px #fff">S</div>
<div class="a" style="left:1876px;top:570px;width:30px;height:30px;background:#000;border-radius:5px"></div>
<div class="a" style="left:1879px;top:572px;width:24px;height:24px;border:2px solid #7a7a7a;border-radius:4px"></div>
<svg class="a" style="left:1876px;top:570px;" width="30" height="30" viewBox="0 0 30 30"><path d="M11.5 4H14.5V13H11.5Z M7 12L13 19L19 12Z" fill="#fff"/></svg>
<div class="a" style="left:1764px;top:622px;width:151px;height:91px;border:1px solid #dcdcdc"></div>
<div class="a" style="left:1770px;top:611px;width:36px;height:16px;background:#f0f0f0"></div>
<div class="t" style="left:1773px;top:608.5px;font-size:15px;line-height:21px;color:#000;">투명</div>
<div class="t" style="left:1771px;top:637.5px;font-size:15px;line-height:21px;color:#000;">불투명</div>
<div class="a" style="left:1876px;top:634px;width:30px;height:30px;background:#000;border-radius:5px"></div>
<div class="a" style="left:1879px;top:636px;width:24px;height:24px;border:2px solid #7a7a7a;border-radius:4px"></div>
<svg class="a" style="left:1876px;top:634px;" width="30" height="30" viewBox="0 0 30 30"><path d="M6 11.5H15M10.5 7V16" stroke="#fff" stroke-width="3"/></svg>
<div class="t" style="left:1771px;top:675.5px;font-size:15px;line-height:21px;color:#000;">투명</div>
<div class="a" style="left:1876px;top:672px;width:30px;height:30px;background:#000;border-radius:5px"></div>
<div class="a" style="left:1879px;top:674px;width:24px;height:24px;border:2px solid #7a7a7a;border-radius:4px"></div>
<svg class="a" style="left:1876px;top:672px;" width="30" height="30" viewBox="0 0 30 30"><path d="M7 8H17.5V11H7Z" fill="#fff"/></svg>
<div class="a" style="left:1764px;top:732px;width:151px;height:84px;border:1px solid #dcdcdc"></div>
<div class="a" style="left:1770px;top:720px;width:86px;height:16px;background:#f0f0f0"></div>
<div class="t" style="left:1773px;top:717.5px;font-size:15px;line-height:21px;color:#000;">이미지 비율</div>
<div class="t" style="left:1771px;top:746.5px;font-size:15px;line-height:21px;color:#000;">유지</div>
<div class="a" style="left:1876px;top:743px;width:30px;height:30px;background:#000;border-radius:5px"></div>
<div class="a" style="left:1879px;top:745px;width:24px;height:24px;border:2px solid #7a7a7a;border-radius:4px"></div>
<div class="t" style="left:1882px;top:746.0px;font-size:16px;line-height:16px;color:#fff;font-weight:bold;transform:scaleX(0.85);transform-origin:left;-webkit-text-stroke:0.6px #fff">8</div>
<div class="t" style="left:1771px;top:784.5px;font-size:15px;line-height:21px;color:#000;">무시</div>
<div class="a" style="left:1876px;top:781px;width:30px;height:30px;background:#000;border-radius:5px"></div>
<div class="a" style="left:1879px;top:783px;width:24px;height:24px;border:2px solid #7a7a7a;border-radius:4px"></div>
<div class="t" style="left:1882px;top:784.0px;font-size:16px;line-height:16px;color:#fff;font-weight:bold;transform:scaleX(0.85);transform-origin:left;-webkit-text-stroke:0.6px #fff">9</div>
<div class="a" style="left:1764px;top:833px;width:151px;height:84px;border:1px solid #dcdcdc"></div>
<div class="a" style="left:1770px;top:822px;width:90px;height:16px;background:#f0f0f0"></div>
<div class="t" style="left:1773px;top:820.5px;font-size:15px;line-height:21px;color:#000;">보기/감추기</div>
<div class="t" style="left:1771px;top:849.5px;font-size:15px;line-height:21px;color:#000;">패널</div>
<div class="a" style="left:1816px;top:846px;width:30px;height:30px;background:#000;border-radius:5px"></div>
<div class="a" style="left:1819px;top:848px;width:24px;height:24px;border:2px solid #7a7a7a;border-radius:4px"></div>
<div class="t" style="left:1822px;top:849.0px;font-size:16px;line-height:16px;color:#fff;font-weight:bold;transform:scaleX(0.85);transform-origin:left;-webkit-text-stroke:0.6px #fff">T</div>
<div class="a" style="left:1846px;top:846px;width:30px;height:30px;background:#000;border-radius:5px"></div>
<div class="a" style="left:1849px;top:848px;width:24px;height:24px;border:2px solid #7a7a7a;border-radius:4px"></div>
<div class="t" style="left:1852px;top:849.0px;font-size:16px;line-height:16px;color:#fff;font-weight:bold;transform:scaleX(0.85);transform-origin:left;-webkit-text-stroke:0.6px #fff">A</div>
<div class="a" style="left:1876px;top:846px;width:30px;height:30px;background:#000;border-radius:5px"></div>
<div class="a" style="left:1879px;top:848px;width:24px;height:24px;border:2px solid #7a7a7a;border-radius:4px"></div>
<div class="t" style="left:1882px;top:849.0px;font-size:16px;line-height:16px;color:#fff;font-weight:bold;transform:scaleX(0.85);transform-origin:left;-webkit-text-stroke:0.6px #fff">B</div>
<div class="t" style="left:1771px;top:886.5px;font-size:15px;line-height:21px;color:#000;">전체화면</div>
<svg class="a" style="left:1876px;top:885px;" width="30" height="26" viewBox="0 0 30 26"><path d="M10 0H30V26H0V11H10Z" fill="#000"/><path d="M22 9V16H10M14 12L10 16L14 20" stroke="#fff" stroke-width="2.4" fill="none"/></svg>
<div class="a" style="left:0px;top:1030px;width:1920px;height:50px;background:linear-gradient(90deg,#16110d,#22180f 40%,#1d150e 70%,#120f0c)"></div>
<svg class="a" style="left:20px;top:1045px;" width="21" height="21" viewBox="0 0 21 21"><path d="M0 3L8.5 1.8V10H0Z M9.5 1.6L21 0V10H9.5Z M0 11H8.5V19.2L0 18Z M9.5 11H21V21L9.5 19.4Z" fill="#fff"/></svg>
<svg class="a" style="left:80px;top:1044px;" width="22" height="22" viewBox="0 0 22 22"><circle cx="13" cy="9" r="7" fill="none" stroke="#fff" stroke-width="1.6"/><path d="M8 14L1 21" stroke="#fff" stroke-width="1.8"/></svg>
<svg class="a" style="left:139px;top:1044px;" width="24" height="22" viewBox="0 0 24 22"><path d="M1.5 2V5.5H18.5V2M1.5 20V16.5H18.5V20M1.5 5.5V16.5M18.5 5.5V16.5" fill="none" stroke="#fff" stroke-width="1.6"/><path d="M22 1V21" stroke="#fff" stroke-width="1.6"/><rect x="20" y="8" width="4" height="5" fill="#fff"/></svg>
<svg class="a" style="left:199px;top:1041px;" width="28" height="28" viewBox="0 0 28 28"><circle cx="14" cy="14" r="13.5" fill="#db4437"/><path d="M14 14L2.3 7.2A13.5 13.5 0 0 0 14 27.5Z" fill="#0f9d58"/><path d="M14 14L14 27.5A13.5 13.5 0 0 0 25.7 7.2Z" fill="#ffcd40"/><circle cx="14" cy="14" r="6" fill="#fff"/><circle cx="14" cy="14" r="4.8" fill="#4285f4"/></svg>
<svg class="a" style="left:261px;top:1043px;" width="28" height="24" viewBox="0 0 28 24"><path d="M0 2H10L12 4H28V24H0Z" fill="#f8d775"/><path d="M0 7H28" stroke="#e7b94a"/><path d="M8 24V14H20V24" fill="none" stroke="#1e88e5" stroke-width="4"/></svg>
<svg class="a" style="left:323px;top:1039px;" width="30" height="30" viewBox="0 0 30 30"><path d="M11 8V5A4 4 0 0 1 19 5V8" fill="none" stroke="#fff" stroke-width="1.6"/><rect x="1" y="8" width="28" height="22" fill="#fff"/><rect x="8" y="13" width="6" height="6" fill="#f25022"/><rect x="15" y="13" width="6" height="6" fill="#7fba00"/><rect x="8" y="20" width="6" height="6" fill="#00a4ef"/><rect x="15" y="20" width="6" height="6" fill="#ffb900"/></svg>
<svg class="a" style="left:384px;top:1044px;" width="32" height="22" viewBox="0 0 32 22"><path d="M0 8L16 0L32 8V22H0Z" fill="#fff"/><path d="M0 8L32 12L12 16Z" fill="#1c1510"/></svg>
<svg class="a" style="left:447px;top:1040px;" width="30" height="30" viewBox="0 0 30 30"><path d="M21 0L30 4V26L21 30L8 17L3 21L0 19.5V10.5L3 9L8 13Z M21 8L13 15L21 22Z M3 12.5V17.5L5.5 15Z" fill="#8f60d6" fill-rule="evenodd"/></svg>
<div class="a" style="left:494px;top:1030px;width:61px;height:50px;background:#4a413a"></div>
<div class="a" style="left:509px;top:1040px;width:30px;height:30px;background:#e4e4e4"></div>
<svg class="a" style="left:509px;top:1040px;" width="30" height="30" viewBox="0 0 30 30"><path d="M8 9Q9 2 16 3Q23 3 22 10L21 8Q15 5 10 9Z" fill="#333"/><ellipse cx="16" cy="12" rx="5.5" ry="7" fill="#9a9a9a"/><path d="M2 30Q4 21 16 21Q28 21 28 30Z" fill="#2a2a2a"/><path d="M13 22L16 27L19 22" fill="#ccc"/></svg>
<div class="a" style="left:556px;top:1030px;width:61px;height:50px;background:#a8561b"></div>
<div class="a" style="left:570px;top:1039px;width:32px;height:32px;background:#fee500;border-radius:3px"></div>
<svg class="a" style="left:573px;top:1044px;" width="26" height="22" viewBox="0 0 26 22"><ellipse cx="13" cy="10" rx="12" ry="9" fill="#3c1e1e"/><path d="M7 16L6 22L12 18Z" fill="#3c1e1e"/><text x="4" y="13" font-size="7" font-weight="bold" font-family="Liberation Sans" fill="#fee500">TALK</text></svg>
<svg class="a" style="left:632px;top:1039px;" width="32" height="32" viewBox="0 0 32 32"><ellipse cx="16" cy="11" rx="13" ry="8" fill="#fff" stroke="#c0392b" stroke-width="1.5" transform="rotate(-20 16 11)"/><ellipse cx="14" cy="15" rx="9" ry="4" fill="#999"/><circle cx="17" cy="24" r="3.5" fill="none" stroke="#1e88e5" stroke-width="2"/><circle cx="24" cy="22" r="3.5" fill="none" stroke="#1e88e5" stroke-width="2"/></svg>
<div class="a" style="left:189px;top:1077px;width:51px;height:3px;background:#76b9ed"></div>
<div class="a" style="left:251px;top:1077px;width:51px;height:3px;background:#76b9ed"></div>
<div class="a" style="left:437px;top:1077px;width:51px;height:3px;background:#76b9ed"></div>
<div class="a" style="left:494px;top:1077px;width:61px;height:3px;background:#76b9ed"></div>
<div class="a" style="left:623px;top:1077px;width:51px;height:3px;background:#76b9ed"></div>
<div class="a" style="left:556px;top:1077px;width:61px;height:3px;background:#ff7a1a"></div>
<svg class="a" style="left:1573px;top:1043px;" width="22" height="22" viewBox="0 0 22 22"><circle cx="8" cy="12" r="3.5" fill="none" stroke="#fff" stroke-width="1.4"/><path d="M2 21Q8 13 14 21" fill="none" stroke="#fff" stroke-width="1.4"/><circle cx="15" cy="6" r="3.5" fill="none" stroke="#fff" stroke-width="1.4"/><path d="M11 12Q15 9 20 14" fill="none" stroke="#fff" stroke-width="1.4"/></svg>
<svg class="a" style="left:1620px;top:1048px;" width="18" height="10" viewBox="0 0 18 10"><path d="M1 9L9 1L17 9" fill="none" stroke="#fff" stroke-width="1.5"/></svg>
<svg class="a" style="left:1648px;top:1045px;" width="22" height="16" viewBox="0 0 22 16"><rect x="2" y="5" width="17" height="9" fill="#fff"/><path d="M19 7H21V12H19M4 1V5M7 1V5" stroke="#fff" stroke-width="1.4"/></svg>
<svg class="a" style="left:1680px;top:1043px;" width="22" height="22" viewBox="0 0 22 22"><path d="M2 20A18 18 0 0 1 20 2M6 20A14 14 0 0 1 20 6M10 20A10 10 0 0 1 20 10" fill="none" stroke="#fff" stroke-width="1.4"/><circle cx="18" cy="18" r="2" fill="#fff"/></svg>
<svg class="a" style="left:1708px;top:1045px;" width="24" height="18" viewBox="0 0 24 18"><path d="M2 6H5L10 2V16L5 12H2Z" fill="none" stroke="#fff" stroke-width="1.3"/><path d="M14 6L20 12M20 6L14 12" stroke="#fff" stroke-width="1.3"/></svg>
<div class="t" style="left:1738px;top:1042.5px;font-size:17px;line-height:23px;color:#fff;">가</div>
<div class="t" style="left:1774px;top:1032.5px;font-size:15px;line-height:21px;color:#fff;">오전 10:38</div>
<div class="t" style="left:1769px;top:1055.5px;font-size:15px;line-height:21px;color:#fff;">2019-09-26</div>
<svg class="a" style="left:1869px;top:1044px;" width="21" height="19" viewBox="0 0 21 19"><path d="M1 1H20V14H6L3 18V14H1Z" fill="#fff"/><path d="M4 5H17M4 8H17M4 11H12" stroke="#1c1510" stroke-width="1.2"/></svg>
<div class="a" style="left:1878px;top:1055px;width:20px;height:20px;background:#2a2a2a;border:1.5px solid #999;border-radius:10px"></div>
<div class="t" style="left:1883px;top:1055.5px;font-size:14px;line-height:19px;color:#fff;font-weight:bold">2</div>
<div class="a" style="left:1914px;top:1030px;width:1px;height:50px;background:#555"></div>
<div class="a" style="left:191px;top:187px;width:429px;height:776px;background:#f5f5f5;border:1px solid #cccedb;box-shadow:3px 3px 3px rgba(0,0,0,.33)"></div>
<div class="a" style="left:195px;top:562px;width:421px;height:28px;background:#c9def5"></div>
<div class="a" style="left:232px;top:424px;width:383px;height:1px;background:#e0e0e6"></div>
<div class="a" style="left:232px;top:487px;width:383px;height:1px;background:#e0e0e6"></div>
<div class="a" style="left:232px;top:522px;width:383px;height:1px;background:#e0e0e6"></div>
<div class="a" style="left:232px;top:558px;width:383px;height:1px;background:#e0e0e6"></div>
<div class="a" style="left:232px;top:593px;width:383px;height:1px;background:#e0e0e6"></div>
<div class="a" style="left:232px;top:743px;width:383px;height:1px;background:#e0e0e6"></div>
<div class="a" style="left:232px;top:807px;width:383px;height:1px;background:#e0e0e6"></div>
<div class="a" style="left:232px;top:928px;width:383px;height:1px;background:#e0e0e6"></div>
<div class="t" style="left:237px;top:195.0px;font-size:15.8px;line-height:22px;color:#1e1e1e;">솔루션 빌드(B)</div>
<div class="t" style="left:505px;top:195.0px;font-size:15.8px;line-height:22px;color:#1e1e1e;">Ctrl+Shift+B</div>
<svg class="a" style="left:200px;top:195px;" width="20" height="20" viewBox="0 0 20 20"><path d="M10 1V8M6 5L10 9L14 5" stroke="#424242" stroke-width="2" fill="none"/><path d="M2 9V17H18V9" fill="none" stroke="#424242" stroke-width="1.5"/><circle cx="6" cy="12" r="1.2" fill="#424242"/><circle cx="10" cy="12" r="1.2" fill="#424242"/><circle cx="14" cy="12" r="1.2" fill="#424242"/><circle cx="8" cy="15" r="1.2" fill="#424242"/><circle cx="12" cy="15" r="1.2" fill="#424242"/></svg>
<div class="t" style="left:237px;top:223.0px;font-size:15.8px;line-height:22px;color:#1e1e1e;">솔루션 다시 빌드(R)</div>
<div class="t" style="left:237px;top:252.0px;font-size:15.8px;line-height:22px;color:#1e1e1e;">솔루션 정리(C)</div>
<div class="t" style="left:237px;top:281.0px;font-size:15.8px;line-height:22px;color:#1e1e1e;">분석 및 코드 정리(A)</div>
<svg class="a" style="left:599px;top:286px;" width="6" height="10" viewBox="0 0 6 10"><path d="M0 0L5 5L0 10Z" fill="#717171"/></svg>
<div class="t" style="left:237px;top:310.0px;font-size:15.8px;line-height:22px;color:#1e1e1e;">일괄 빌드(T)...</div>
<div class="t" style="left:237px;top:338.0px;font-size:15.8px;line-height:22px;color:#1e1e1e;">구성 관리자(O)...</div>
<div class="t" style="left:237px;top:367.0px;font-size:15.8px;line-height:22px;color:#1e1e1e;">솔루션용 NuGet 패키지 관리...</div>
<svg class="a" style="left:200px;top:367px;" width="20" height="20" viewBox="0 0 20 20"><rect x="3" y="6" width="14" height="12" fill="none" stroke="#424242" stroke-width="1.6"/><path d="M3 12H17M10 6V18M6 2L10 6L14 2" stroke="#424242" stroke-width="1.6" fill="none"/></svg>
<div class="t" style="left:237px;top:396.0px;font-size:15.8px;line-height:22px;color:#1e1e1e;">NuGet 패키지 복원(G)</div>
<svg class="a" style="left:200px;top:396px;" width="20" height="20" viewBox="0 0 20 20"><path d="M1.5 18V3.5H6" fill="none" stroke="#424242" stroke-width="1.4"/><rect x="4.5" y="8.5" width="13" height="10" fill="none" stroke="#424242" stroke-width="1.4"/><path d="M9 6A5 5 0 0 1 16 4" fill="none" stroke="#1e73c8" stroke-width="2"/><path d="M14 1L17 4L13 6Z" fill="#1e73c8"/></svg>
<div class="t" style="left:237px;top:431.0px;font-size:15.8px;line-height:22px;color:#1e1e1e;">테스트 실행(T)</div>
<svg class="a" style="left:200px;top:431px;" width="20" height="20" viewBox="0 0 20 20"><path d="M1 1L5 4L1 7Z" fill="#388a34"/><path d="M8 4H14M9 4V9L4 18H18L13 9V4" fill="none" stroke="#424242" stroke-width="1.5"/><path d="M7 12H15L18 18H4Z" fill="#424242"/></svg>
<div class="t" style="left:237px;top:459.0px;font-size:15.8px;line-height:22px;color:#1e1e1e;">테스트 디버그(T)</div>
<div class="t" style="left:237px;top:495.0px;font-size:15.8px;line-height:22px;color:#1e1e1e;">새 솔루션 탐색기 뷰(N)</div>
<svg class="a" style="left:200px;top:495px;" width="20" height="20" viewBox="0 0 20 20"><rect x="1.5" y="4.5" width="14" height="13" fill="none" stroke="#424242" stroke-width="1.4"/><path d="M4 2.5H18V15" fill="none" stroke="#424242" stroke-width="1.4"/><path d="M4 9H13M4 12H13M4 15H13" stroke="#424242" stroke-width="1"/></svg>
<div class="t" style="left:237px;top:530.0px;font-size:15.8px;line-height:22px;color:#1e1e1e;">코드 메트릭 계산(C)</div>
<div class="t" style="left:237px;top:566.0px;font-size:15.8px;line-height:22px;color:#1e1e1e;">추가(D)</div>
<svg class="a" style="left:599px;top:571px;" width="6" height="10" viewBox="0 0 6 10"><path d="M0 0L5 5L0 10Z" fill="#1e73c8"/></svg>
<div class="t" style="left:237px;top:601.0px;font-size:15.8px;line-height:22px;color:#1e1e1e;">실행 취소(U)...</div>
<svg class="a" style="left:200px;top:601px;" width="20" height="20" viewBox="0 0 20 20"><path d="M6 5H11A5 5 0 0 1 13 14.5L8 19" fill="none" stroke="#1e6ec8" stroke-width="2.6" stroke-linecap="round"/><path d="M1 5L7 0.5V9.5Z" fill="#1e6ec8"/></svg>
<div class="t" style="left:237px;top:629.0px;font-size:15.8px;line-height:22px;color:#1e1e1e;">커밋(I)...</div>
<svg class="a" style="left:200px;top:629px;" width="20" height="20" viewBox="0 0 20 20"><path d="M10 1L15 7H12V10H8V7H5Z" fill="#1e73c8"/><rect x="3" y="12" width="14" height="6" fill="#424242"/></svg>
<div class="t" style="left:237px;top:658.0px;font-size:15.8px;line-height:22px;color:#1e1e1e;">기록 보기(H)...</div>
<svg class="a" style="left:200px;top:658px;" width="20" height="20" viewBox="0 0 20 20"><path d="M4 6A8 8 0 1 1 3 12" fill="none" stroke="#388a34" stroke-width="2"/><path d="M1 2L1 8L7 8Z" fill="#388a34"/><path d="M10 5V10L13 13" stroke="#424242" stroke-width="1.6" fill="none"/></svg>
<div class="t" style="left:237px;top:687.0px;font-size:15.8px;line-height:22px;color:#a2a4a5;">수정되지 않은 항목과 비교(C)...</div>
<svg class="a" style="left:200px;top:687px;" width="20" height="20" viewBox="0 0 20 20"><path d="M4 2H12L16 6V18H4Z M1 6V18" fill="none" stroke="#b0b0b0" stroke-width="1.3"/><circle cx="10" cy="11" r="3.5" fill="none" stroke="#b0b0b0" stroke-width="1.3"/></svg>
<div class="t" style="left:237px;top:716.0px;font-size:15.8px;line-height:22px;color:#1e1e1e;">원인(주석 달기)(A)</div>
<svg class="a" style="left:200px;top:716px;" width="20" height="20" viewBox="0 0 20 20"><path d="M1.5 1.5H18.5V14.5H8L4 18V14.5H1.5Z" fill="none" stroke="#424242" stroke-width="1.5"/></svg>
<div class="t" style="left:237px;top:751.0px;font-size:15.8px;line-height:22px;color:#a2a4a5;">붙여넣기(P)</div>
<div class="t" style="left:505px;top:751.0px;font-size:15.8px;line-height:22px;color:#a2a4a5;">Ctrl+V</div>
<svg class="a" style="left:200px;top:751px;" width="20" height="20" viewBox="0 0 20 20"><path d="M4 6V18H12M12 14V6H9" fill="none" stroke="#b0b0b0" stroke-width="1.3"/><rect x="6" y="2" width="5" height="5" fill="none" stroke="#b0b0b0" stroke-width="1.3"/><rect x="9" y="10" width="8" height="8" fill="none" stroke="#b0b0b0" stroke-width="1.3"/></svg>
<div class="t" style="left:237px;top:779.0px;font-size:15.8px;line-height:22px;color:#1e1e1e;">이름 바꾸기(M)</div>
<svg class="a" style="left:200px;top:779px;" width="20" height="20" viewBox="0 0 20 20"><rect x="1.5" y="4.5" width="17" height="11" fill="none" stroke="#424242" stroke-width="1.4"/><path d="M5 7V13M4 7H6M4 13H6" stroke="#424242" stroke-width="1"/></svg>
<div class="t" style="left:237px;top:815.0px;font-size:15.8px;line-height:22px;color:#1e1e1e;">파일 탐색기에서 폴더 열기(X)</div>
<svg class="a" style="left:200px;top:815px;" width="20" height="20" viewBox="0 0 20 20"><path d="M3 17V12A6 6 0 0 1 9 6H15" fill="none" stroke="#1e73c8" stroke-width="2.6"/><path d="M13 1L19 6L13 11Z" fill="#1e73c8"/></svg>
<div class="t" style="left:237px;top:843.0px;font-size:15.8px;line-height:22px;color:#1e1e1e;">솔루션 필터로 저장</div>
<div class="t" style="left:237px;top:871.0px;font-size:15.8px;line-height:22px;color:#1e1e1e;">언로드된 프로젝트 숨기기</div>
<div class="t" style="left:237px;top:900.0px;font-size:15.8px;line-height:22px;color:#1e1e1e;">프로젝트 종속성 로드</div>
<div class="t" style="left:237px;top:936.0px;font-size:15.8px;line-height:22px;color:#1e1e1e;">속성(R)</div>
<div class="t" style="left:505px;top:936.0px;font-size:15.8px;line-height:22px;color:#1e1e1e;">Alt+Enter</div>
<svg class="a" style="left:200px;top:936px;" width="20" height="20" viewBox="0 0 20 20"><path d="M3 18L11 10" stroke="#1e1e1e" stroke-width="4.2" stroke-linecap="round"/><path d="M9 9A6 6 0 0 1 17 1L13.5 5L15.5 7L19 3.5A6 6 0 0 1 11.5 11.5Z" fill="#1e1e1e"/></svg>
<div class="a" style="left:617px;top:562px;width:344px;height:221px;background:#f5f5f5;border:1px solid #cccedb;box-shadow:3px 3px 3px rgba(0,0,0,.33)"></div>
<div class="a" style="left:620px;top:565px;width:337px;height:28px;background:#c9def5"></div>
<div class="a" style="left:656px;top:654px;width:301px;height:1px;background:#e0e0e6"></div>
<div class="a" style="left:656px;top:746px;width:301px;height:1px;background:#e0e0e6"></div>
<div class="t" style="left:662px;top:569.0px;font-size:15.7px;line-height:21px;color:#1e1e1e;">새 프로젝트(N)...</div>
<div class="t" style="left:662px;top:598.0px;font-size:15.7px;line-height:21px;color:#1e1e1e;">기존 프로젝트(E)...</div>
<div class="t" style="left:662px;top:626.0px;font-size:15.7px;line-height:21px;color:#1e1e1e;">기존 웹 사이트(B)...</div>
<div class="t" style="left:662px;top:662.0px;font-size:15.7px;line-height:21px;color:#1e1e1e;">새 항목(W)...</div>
<div class="t" style="left:845px;top:661.5px;font-size:15.7px;line-height:21px;color:#1e1e1e;">Ctrl+Shift+A</div>
<svg class="a" style="left:626px;top:661px;" width="20" height="20" viewBox="0 0 20 20"><path d="M4 0V6M1 3H7M2 1L6 5M6 1L2 5" stroke="#e8a33a" stroke-width="1.2"/><rect x="7.5" y="7.5" width="10" height="10" fill="none" stroke="#1e1e1e" stroke-width="2.2"/><path d="M5 9V18H9" fill="none" stroke="#1e1e1e" stroke-width="2"/></svg>
<div class="t" style="left:662px;top:691.0px;font-size:15.7px;line-height:21px;color:#1e1e1e;">기존 항목(G)...</div>
<div class="t" style="left:845px;top:690.5px;font-size:15.7px;line-height:21px;color:#1e1e1e;">Shift+Alt+A</div>
<svg class="a" style="left:626px;top:690px;" width="20" height="20" viewBox="0 0 20 20"><path d="M4 0V8M0 4H8" stroke="#388a34" stroke-width="2"/><rect x="7.5" y="7.5" width="10" height="10" fill="none" stroke="#1e1e1e" stroke-width="2.2"/><path d="M5 9V18H9" fill="none" stroke="#1e1e1e" stroke-width="2"/></svg>
<div class="t" style="left:662px;top:720.0px;font-size:15.7px;line-height:21px;color:#1e1e1e;">새 솔루션 폴더(D)</div>
<svg class="a" style="left:626px;top:719px;" width="20" height="20" viewBox="0 0 20 20"><path d="M4 0V6M1 3H7M2 1L6 5M6 1L2 5" stroke="#e8a33a" stroke-width="1.2"/><path d="M2 8H9L11 10H18V18H2Z" fill="#dcb67a"/></svg>
<div class="t" style="left:662px;top:755.0px;font-size:15.7px;line-height:21px;color:#1e1e1e;">설치 구성 파일(I)</div>
</body></html>
